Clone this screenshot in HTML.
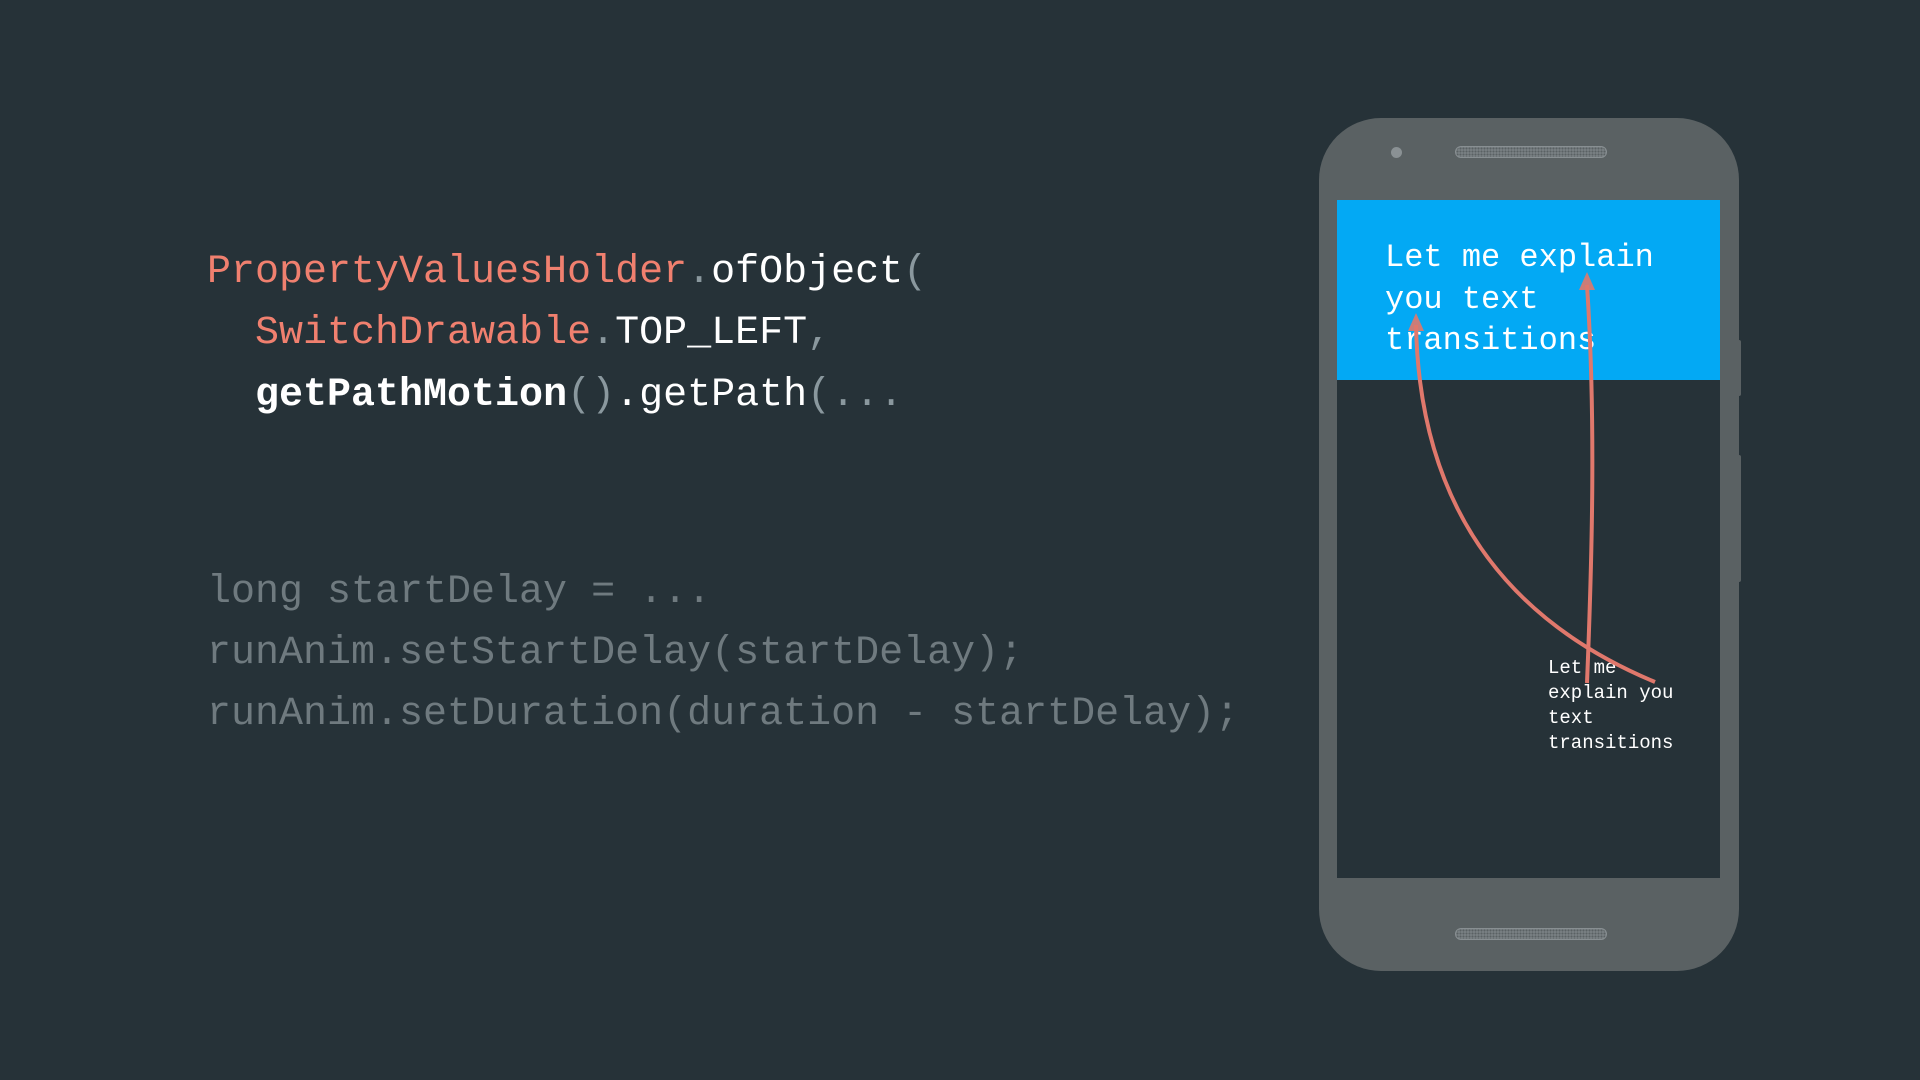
<!DOCTYPE html>
<html><head><meta charset="utf-8"><style>
html,body{margin:0;padding:0;}
body{width:1920px;height:1080px;background:#263238;position:relative;overflow:hidden;font-family:"Liberation Mono",monospace;}
.code{position:absolute;left:207px;font-size:40px;line-height:61px;white-space:pre;}
.r{color:#f0806f}.w{color:#ffffff}.g{color:#8a989e}.b{font-weight:bold;color:#fff}
.dim{color:#6f7a7f}
.phone{position:absolute;left:1319px;top:118px;width:420px;height:853px;background:#5a6163;border-radius:62px;}
.screen{position:absolute;left:1337px;top:200px;width:383px;height:678px;background:#263238;}
.blue{position:absolute;left:1337px;top:200px;width:383px;height:180px;background:#03a9f4;}
.spk{position:absolute;left:1455px;width:152px;height:12px;border-radius:6px;background:#7a8184;
background-image:radial-gradient(circle,#5a6163 0.8px,transparent 1.2px);background-size:3px 3px;border:1px solid #888f92;box-sizing:border-box}
</style></head><body>
<div class="code" style="top:242px"><span class="r">PropertyValuesHolder</span><span class="g">.</span><span class="w">ofObject</span><span class="g">(</span></div>
<div class="code" style="top:303px">  <span class="r">SwitchDrawable</span><span class="g">.</span><span class="w">TOP_LEFT</span><span class="g">,</span></div>
<div class="code" style="top:365px">  <span class="b">getPathMotion</span><span class="g">()</span><span class="w">.getPath</span><span class="g">(...</span></div>
<div class="code dim" style="top:562px">long startDelay = ...</div>
<div class="code dim" style="top:623px">runAnim.setStartDelay(startDelay);</div>
<div class="code dim" style="top:684px">runAnim.setDuration(duration - startDelay);</div>

<div class="phone"></div>
<div style="position:absolute;left:1737px;top:340px;width:4px;height:56px;background:#5a6163;border-radius:2px"></div>
<div style="position:absolute;left:1737px;top:455px;width:4px;height:127px;background:#5a6163;border-radius:2px"></div>
<div style="position:absolute;left:1391px;top:147px;width:11px;height:11px;border-radius:50%;background:#8a9194"></div>
<div class="spk" style="top:146px"></div>
<div class="spk" style="top:928px"></div>
<div class="screen"></div>
<div class="blue"></div>
<div style="position:absolute;left:1385px;top:237px;font-size:32px;line-height:41.5px;color:#fff;white-space:pre">Let me explain
you text
transitions</div>
<div style="position:absolute;left:1548px;top:656px;font-size:19px;line-height:25px;color:#fff;white-space:pre">Let me
explain you
text
transitions</div>
<svg style="position:absolute;left:0;top:0" width="1920" height="1080">
<g fill="none" stroke="#e0786c" stroke-width="4" stroke-linecap="butt">
<path d="M1655 682 C1530 630 1420 530 1416 325"/>
<path d="M1587 683 C1592 560 1596 420 1587 285"/>
</g>
<g fill="#e0786c" opacity="0.9">
<path d="M1416 313 L1424 331 L1408 331 Z"/>
<path d="M1587 272 L1595 290 L1579 290 Z"/>
</g>
</svg>
</body></html>
